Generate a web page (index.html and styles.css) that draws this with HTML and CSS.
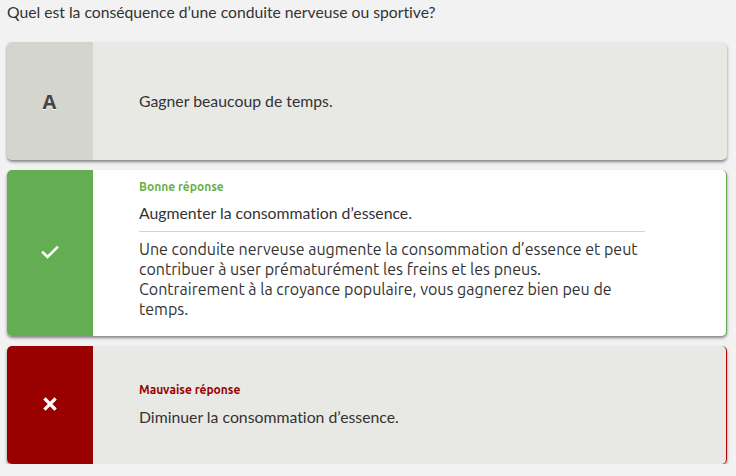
FILE: index.html
```html
<!DOCTYPE html>
<html lang="fr">
<head>
<meta charset="utf-8">
<link rel="stylesheet" href="styles.css">
</head>
<body>
<div class="page">
  <p class="question">Quel est la conséquence d’une conduite nerveuse ou sportive?</p>
  <div class="cards">
    <div class="card card-neutral">
      <div class="side side-neutral"><span class="letter">A</span></div>
      <div class="content">
        <p class="answer">Gagner beaucoup de temps.</p>
      </div>
    </div>
    <div class="card card-good">
      <div class="side side-good">
        <svg class="icon" width="18" height="14" viewBox="0 0 18 14"><path d="M2 7.5 L6.5 12 L16 2.5" fill="none" stroke="#fff" stroke-width="2.6" stroke-linecap="square"/></svg>
      </div>
      <div class="content content-good">
        <p class="label label-good">Bonne réponse</p>
        <p class="answer">Augmenter la consommation d’essence.</p>
        <hr class="sep">
        <p class="explain">Une conduite nerveuse augmente la consommation d’essence et peut contribuer à user prématurément les freins et les pneus.<br>Contrairement à la croyance populaire, vous gagnerez bien peu de temps.</p>
      </div>
    </div>
    <div class="card card-bad">
      <div class="side side-bad">
        <svg class="icon" width="14" height="14" viewBox="0 0 14 14"><path d="M2.5 2.5 L11.5 11.5 M11.5 2.5 L2.5 11.5" fill="none" stroke="#fff" stroke-width="3.2" stroke-linecap="square"/></svg>
      </div>
      <div class="content">
        <p class="label label-bad">Mauvaise réponse</p>
        <p class="answer">Diminuer la consommation d’essence.</p>
      </div>
    </div>
  </div>
</div>
</body>
</html>
```

FILE: styles.css
```css
html, body {
  margin: 0;
  padding: 0;
  background: #f2f2f2;
}
body {
  font-family: Lato, "Liberation Sans", sans-serif;
  font-variant-ligatures: none;
  color: #333;
}
.page {
  padding: 2px 9px 0 7px;
}
.question {
  margin: 0;
  font-size: 15.7px;
  line-height: 20px;
  color: #333;
}
.cards {
  margin-top: 20px;
  display: flex;
  flex-direction: column;
  gap: 10px;
}
.card {
  display: flex;
  min-height: 118px;
  border-radius: 5px;
  overflow: hidden;
  box-shadow: 0 2px 3px rgba(0,0,0,0.45);
  background: #e8e9e5;
}
.card-good {
  background: #fff;
  border-right: 1px solid #63ad52;
}
.card-bad {
  border-right: 1px solid #b30000;
}
.side {
  width: 86px;
  flex: none;
  display: flex;
  align-items: center;
  justify-content: center;
}
.side-neutral { background: #d4d6cd; }
.side-good { background: #63ad52; }
.side-bad { background: #990000; }
.letter {
  font-family: "Open Sans", "Liberation Sans", sans-serif;
  font-weight: 700;
  font-size: 20px;
  color: #444;
  text-shadow: 0 1px 0 #fff;
  margin-right: 1px;
}
.icon { display: block; }
.side-good .icon { margin-top: -3px; margin-right: 1px; }
.side-bad .icon { margin-top: -2px; margin-right: 1px; }
.content {
  flex: 1;
  display: flex;
  flex-direction: column;
  justify-content: center;
  padding: 8px 81px 8px 46px;
}
.content-good {
  justify-content: flex-start;
  padding-top: 10px;
  padding-bottom: 17px;
}
.answer {
  margin: 0;
  font-size: 15.8px;
  line-height: 22px;
  color: #333;
}
.label {
  margin: 0 0 9px;
  font-family: Ubuntu, "Noto Sans", "Open Sans", sans-serif;
  font-weight: 700;
  font-size: 12px;
  line-height: 14px;
}
.label-good { color: #6ab04c; margin-bottom: 8px; }
.label-bad { color: #990000; }
.sep {
  border: 0;
  border-top: 1px solid #d4d6cd;
  margin: 7px 0;
  height: 0;
}
.explain {
  margin: 0;
  font-family: Ubuntu, "Noto Sans", "Open Sans", sans-serif;
  font-size: 16px;
  line-height: 20px;
  color: #333;
}
```
